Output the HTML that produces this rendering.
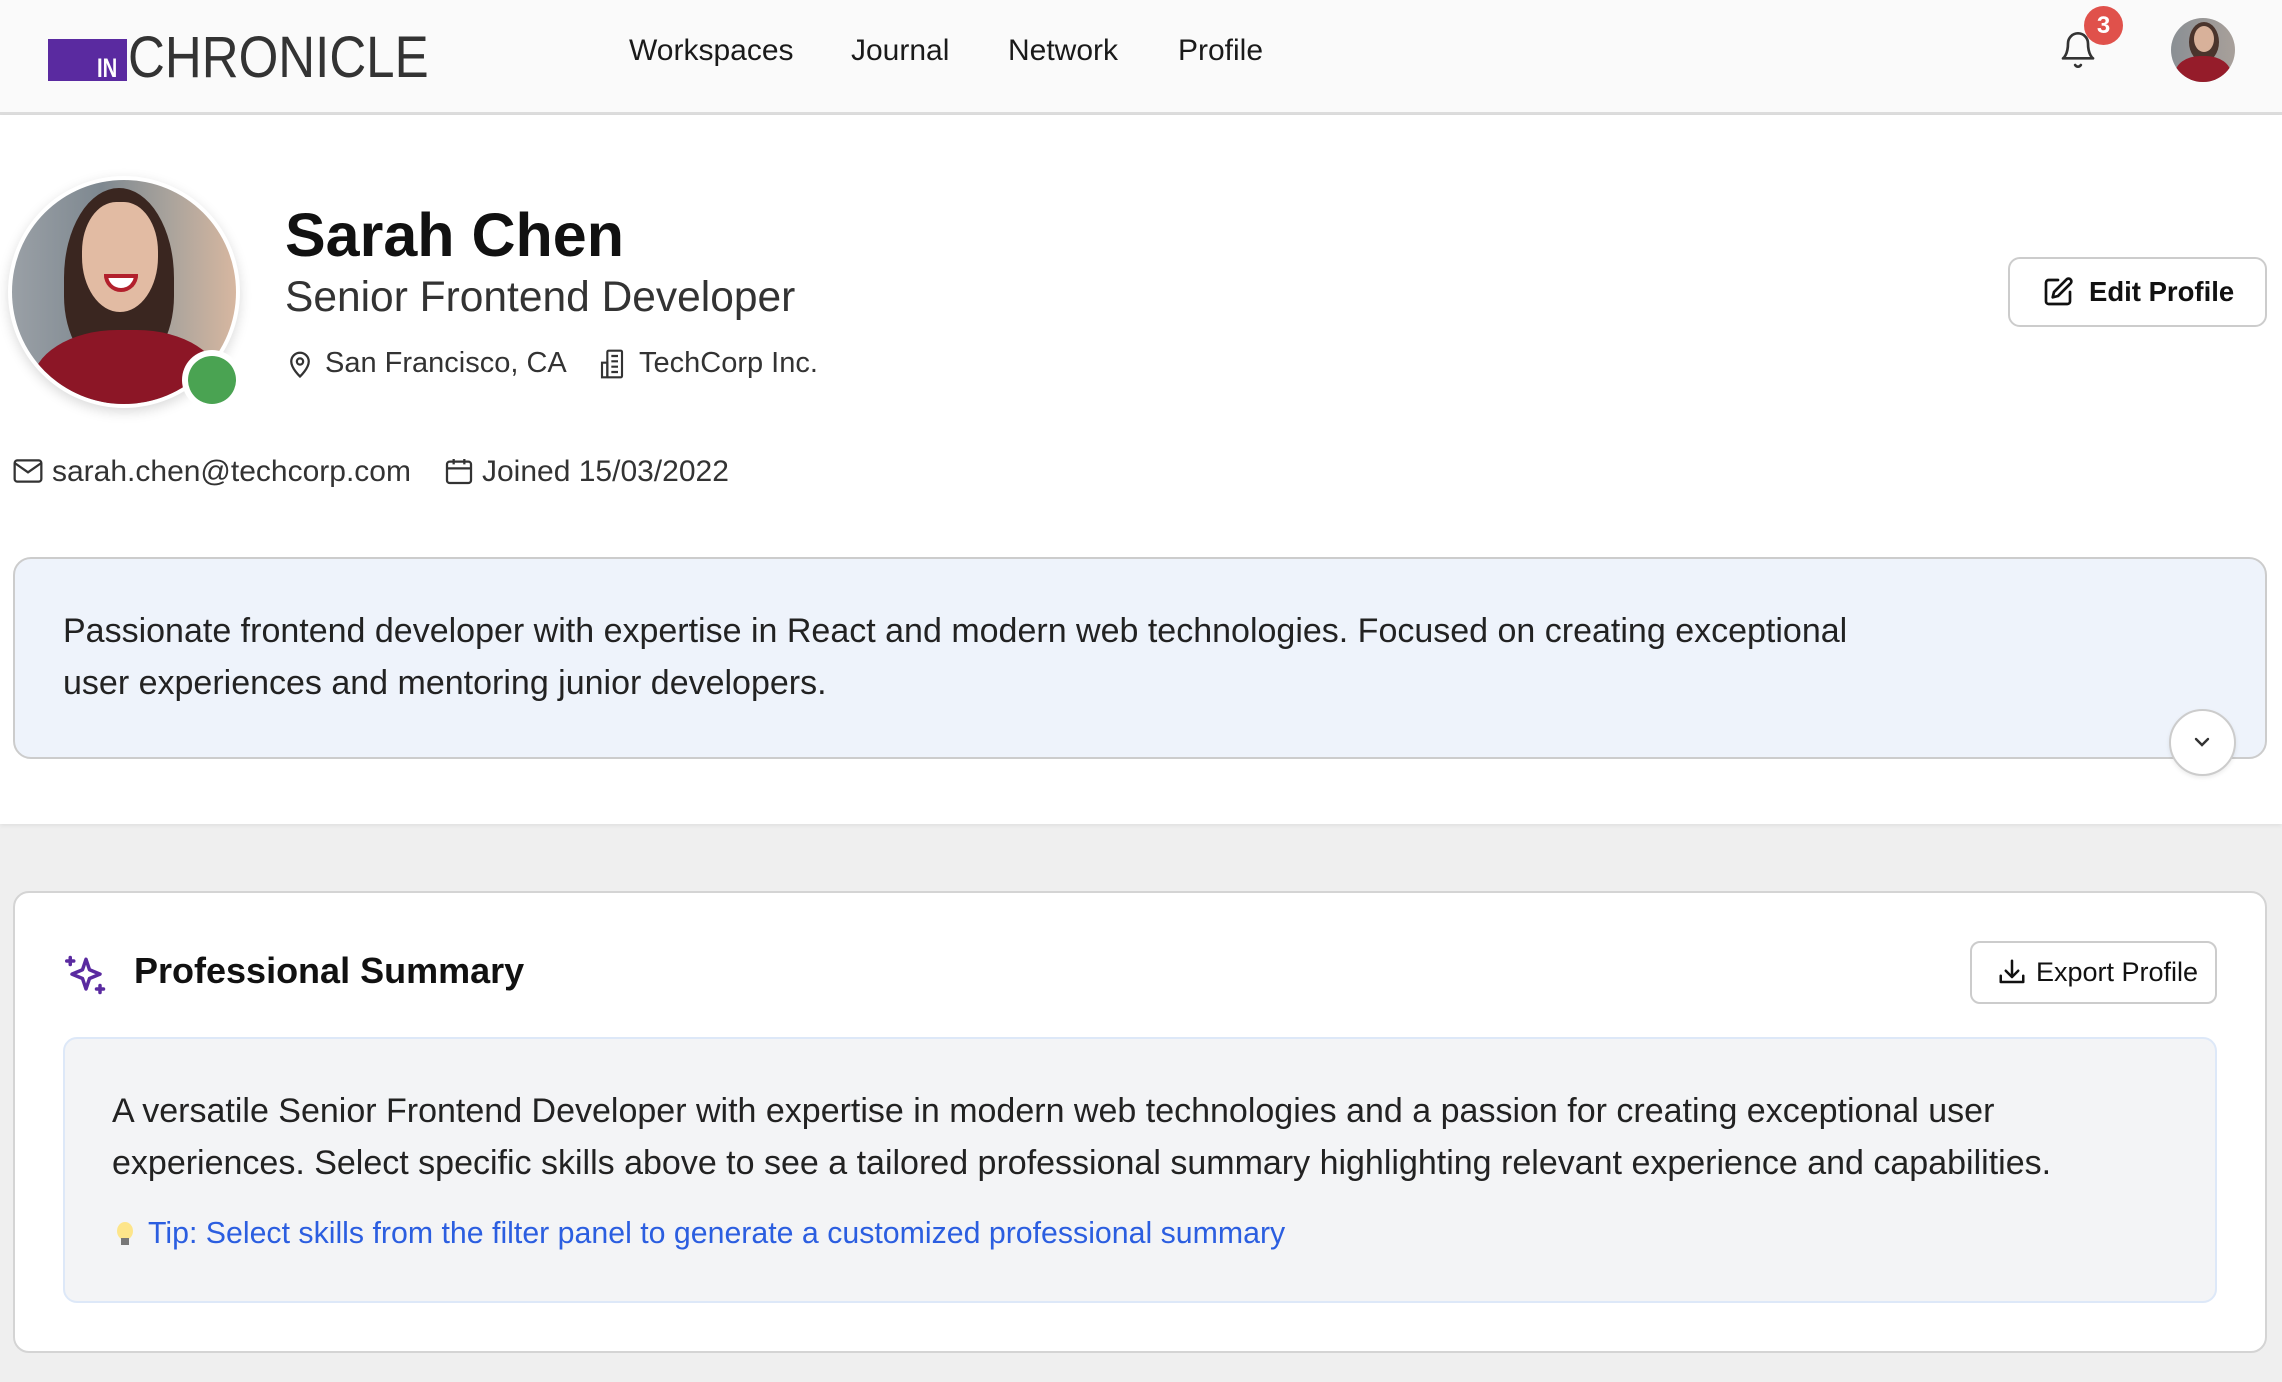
<!DOCTYPE html>
<html><head><meta charset="utf-8"><style>
*{box-sizing:border-box;margin:0;padding:0}
body{width:2282px;height:1382px;overflow:hidden;background:#efefef;font-family:"Liberation Sans",sans-serif;color:#1a1a1a;position:relative}
.abs{position:absolute}
.hdr{left:0;top:0;width:2282px;height:115px;background:#fafafa;border-bottom:3px solid #dcdcdc}
.nav{top:34px;font-size:30px;color:#1a1a1a;white-space:nowrap}
.top{left:0;top:115px;width:2282px;height:709px;background:#fff;box-shadow:0 2px 4px rgba(0,0,0,.06)}
.t{white-space:nowrap}
</style></head><body>
<div class="abs hdr"></div>
<div class="abs" style="left:48px;top:39px;width:79px;height:42px;background:#5a2aa0"></div>
<div class="abs t" style="left:97px;top:53px;font-size:27px;font-weight:bold;color:#fff;transform:scaleX(.75);transform-origin:left">IN</div>
<div class="abs t" style="left:128px;top:29px;font-size:58px;color:#333;transform:scaleX(.88);transform-origin:left;line-height:1">CHRONICLE</div>
<div class="abs nav" style="left:629px">Workspaces</div>
<div class="abs nav" style="left:851px">Journal</div>
<div class="abs nav" style="left:1008px">Network</div>
<div class="abs nav" style="left:1178px">Profile</div>
<svg class="abs" style="left:2058px;top:30px" width="40" height="40" viewBox="0 0 24 24" fill="none" stroke="#333" stroke-width="1.6" stroke-linecap="round" stroke-linejoin="round"><path d="M6 8a6 6 0 0 1 12 0c0 7 3 9 3 9H3s3-2 3-9"/><path d="M10.3 21a1.94 1.94 0 0 0 3.4 0"/></svg>
<div class="abs" style="left:2084px;top:6px;width:39px;height:39px;border-radius:50%;background:#e0514b;color:#fff;font-weight:bold;font-size:24px;text-align:center;line-height:39px">3</div>
<div class="abs" style="left:2171px;top:18px;width:64px;height:64px;border-radius:50%;overflow:hidden;background:linear-gradient(90deg,#8a8f94,#a8a09a)">
 <div class="abs" style="left:18px;top:4px;width:30px;height:40px;border-radius:50%;background:#4a342c"></div>
 <div class="abs" style="left:23px;top:8px;width:20px;height:26px;border-radius:50%;background:#d8b19a"></div>
 <div class="abs" style="left:4px;top:38px;width:56px;height:40px;border-radius:45% 45% 0 0;background:#951c2a"></div>
</div>

<div class="abs top"></div>
<div class="abs" style="left:8px;top:176px;width:232px;height:232px;border-radius:50%;background:#fff;box-shadow:0 4px 12px rgba(0,0,0,.15)"></div>
<div class="abs" style="left:12px;top:180px;width:224px;height:224px;border-radius:50%;overflow:hidden;background:linear-gradient(90deg,#9aa0a6,#7e8890 40%,#a9a39c 70%,#d7b7a0)">
 <div class="abs" style="left:52px;top:8px;width:110px;height:180px;border-radius:50% 50% 40% 40%;background:#3a2620"></div>
 <div class="abs" style="left:70px;top:22px;width:76px;height:110px;border-radius:45% 45% 50% 50%;background:#e2bba3"></div>
 <div class="abs" style="left:92px;top:94px;width:34px;height:18px;border-radius:0 0 20px 20px;background:#fff;border:4px solid #b2202c"></div>
 <div class="abs" style="left:20px;top:150px;width:190px;height:120px;border-radius:45% 45% 0 0;background:#8c1626"></div>
</div>
<div class="abs" style="left:182px;top:350px;width:60px;height:60px;border-radius:50%;background:#fff"></div>
<div class="abs" style="left:188px;top:356px;width:48px;height:48px;border-radius:50%;background:#4aa352"></div>

<div class="abs t" style="left:285px;top:200px;font-size:61px;font-weight:bold;color:#111">Sarah Chen</div>
<div class="abs t" style="left:285px;top:274px;font-size:42.5px;color:#333">Senior Frontend Developer</div>
<svg class="abs" style="left:285px;top:348px" width="30" height="32" viewBox="0 0 24 24" fill="none" stroke="#333" stroke-width="1.8"><path d="M12 22s7-6.5 7-12a7 7 0 0 0-14 0c0 5.5 7 12 7 12z"/><circle cx="12" cy="10" r="2.5"/></svg>
<div class="abs t" style="left:325px;top:347px;font-size:29px;color:#333">San Francisco, CA</div>
<svg class="abs" style="left:598px;top:348px" width="32" height="32" viewBox="0 0 24 24" fill="none" stroke="#333" stroke-width="1.6"><rect x="7" y="2" width="11" height="20" rx="1"/><path d="M3 11h4v11H3zM10 6h5M10 10h5M10 14h5M10 18h5"/></svg>
<div class="abs t" style="left:639px;top:347px;font-size:29px;color:#333">TechCorp Inc.</div>

<svg class="abs" style="left:12px;top:457px" width="32" height="28" viewBox="0 0 24 20" fill="none" stroke="#333" stroke-width="1.7"><rect x="2" y="2" width="20" height="16" rx="2"/><path d="M2 4l10 7 10-7"/></svg>
<div class="abs t" style="left:52px;top:455px;font-size:30px;color:#333">sarah.chen@techcorp.com</div>
<svg class="abs" style="left:443px;top:455px" width="32" height="32" viewBox="0 0 24 24" fill="none" stroke="#333" stroke-width="1.7"><rect x="3" y="5" width="18" height="16" rx="2"/><path d="M3 10h18M8 3v4M16 3v4"/></svg>
<div class="abs t" style="left:482px;top:455px;font-size:30px;color:#333">Joined 15/03/2022</div>

<div class="abs" style="left:2008px;top:257px;width:259px;height:70px;border:2px solid #ccc;border-radius:12px;background:#fff"></div>
<svg class="abs" style="left:2042px;top:276px" width="32" height="32" viewBox="0 0 24 24" fill="none" stroke="#111" stroke-width="2" stroke-linecap="round" stroke-linejoin="round"><path d="M12 3H5a2 2 0 0 0-2 2v14a2 2 0 0 0 2 2h14a2 2 0 0 0 2-2v-7"/><path d="M18.4 2.6a2.1 2.1 0 0 1 3 3L12 15l-4 1 1-4z"/></svg>
<div class="abs t" style="left:2089px;top:276px;font-size:27.5px;font-weight:bold;color:#111">Edit Profile</div>

<div class="abs" style="left:13px;top:557px;width:2254px;height:202px;border:2px solid #ccc;border-radius:18px;background:#eef3fb"></div>
<div class="abs" style="left:63px;top:605px;width:1830px;font-size:34px;line-height:52px;color:#222">Passionate frontend developer with expertise in React and modern web technologies. Focused on creating exceptional user experiences and mentoring junior developers.</div>
<div class="abs" style="left:2169px;top:709px;width:67px;height:67px;border-radius:50%;background:#fff;border:2px solid #ccc;box-shadow:0 2px 4px rgba(0,0,0,.08)"></div>
<svg class="abs" style="left:2190px;top:730px" width="24" height="24" viewBox="0 0 24 24" fill="none" stroke="#333" stroke-width="2.4" stroke-linecap="round"><path d="M6 9l6 6 6-6"/></svg>

<div class="abs" style="left:13px;top:891px;width:2254px;height:462px;border:2px solid #d4d4d4;border-radius:16px;background:#fff"></div>
<svg class="abs" style="left:65px;top:954px" width="42" height="42" viewBox="0 0 24 24" fill="none" stroke="#5a2aa0" stroke-width="2" stroke-linecap="round" stroke-linejoin="round"><path d="M12 3l2 6 6 2.5-6 2.5-2 6-2-6-6-2.5 6-2.5z"/><path d="M3 2v4M1 4h4M20 18v4M18 20h4"/></svg>
<div class="abs t" style="left:134px;top:950px;font-size:36px;font-weight:bold;color:#111">Professional Summary</div>
<div class="abs" style="left:1970px;top:941px;width:247px;height:63px;border:2px solid #ccc;border-radius:10px;background:#fff"></div>
<svg class="abs" style="left:1997px;top:957px" width="30" height="30" viewBox="0 0 24 24" fill="none" stroke="#111" stroke-width="2" stroke-linecap="round" stroke-linejoin="round"><path d="M3 15v5h18v-5"/><path d="M12 3v13M7 11l5 5 5-5"/></svg>
<div class="abs t" style="left:2036px;top:957px;font-size:27px;color:#111">Export Profile</div>

<div class="abs" style="left:63px;top:1037px;width:2154px;height:266px;border:2px solid #dde8f8;border-radius:14px;background:#f3f4f6"></div>
<div class="abs" style="left:112px;top:1085px;width:1990px;font-size:34px;line-height:52px;color:#222">A versatile Senior Frontend Developer with expertise in modern web technologies and a passion for creating exceptional user experiences. Select specific skills above to see a tailored professional summary highlighting relevant experience and capabilities.</div>
<div class="abs" style="left:117px;top:1222px;width:16px;height:18px;border-radius:50%;background:#fde58a"></div>
<div class="abs" style="left:121px;top:1238px;width:8px;height:7px;background:#777"></div>
<div class="abs t" style="left:148px;top:1217px;font-size:30.3px;color:#2b5ee0">Tip: Select skills from the filter panel to generate a customized professional summary</div>
</body></html>
